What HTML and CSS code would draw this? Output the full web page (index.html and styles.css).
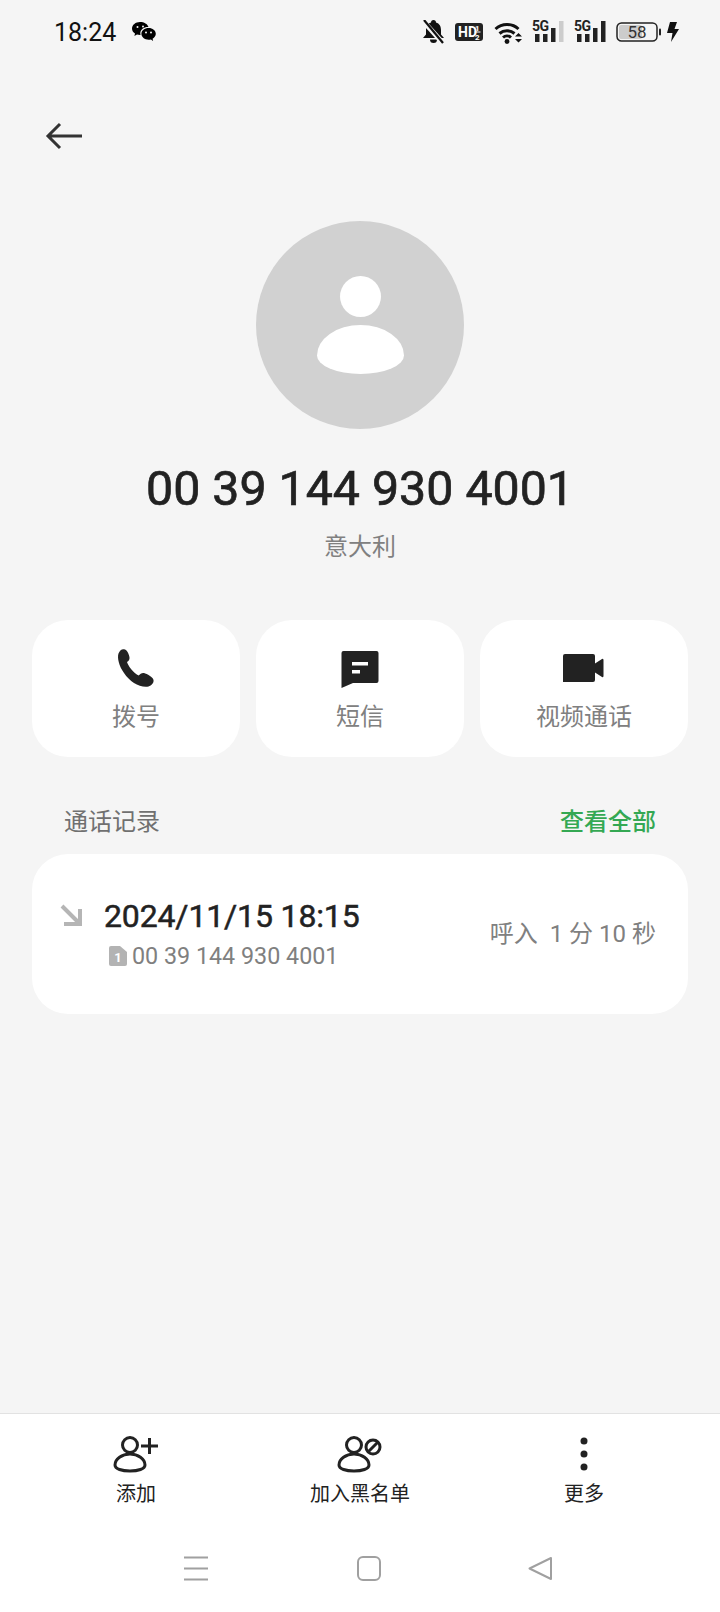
FILE: index.html
```html
<!DOCTYPE html>
<html lang="zh-CN">
<head>
    <meta charset="UTF-8">
    <meta name="viewport" content="width=device-width, initial-scale=1.0">
    <title>通话详情</title>
    <link rel="stylesheet" href="styles.css">
</head>
<body>

<div class="page">
    <!-- 状态栏 -->
    <div class="status-bar">
        <div class="status-left">
            <span class="time">18:24</span>
            <svg class="wechat" width="24" height="20" viewBox="0 0 24 20">
                <path d="M8 0C3.600 0 0 2.900 0 6.500c0 2.100 1.200 3.900 3 5.100L2.400 14l2.600-1.400c.9.300 1.900.4 3 .4h.6a6 6 0 0 1-.3-1.800c0-3.600 3.500-6.300 7.700-6.300h.5C15.600 2.100 12.100 0 8 0z" fill="#000"/>
                <path d="M23.800 11.800c0-3.300-3.200-5.900-7.200-5.900s-7.200 2.600-7.200 5.900 3.200 5.900 7.200 5.900c.8 0 1.600-.1 2.300-.3l2.200 1.500-.5-2.200c1.900-1.100 3.200-2.900 3.200-4.900z" fill="#000"/>
                <circle cx="5.500" cy="5" r="1" fill="#f5f5f5"/>
                <circle cx="11" cy="4.500" r="1" fill="#f5f5f5"/>
                <circle cx="14" cy="10.500" r="1" fill="#f5f5f5"/>
                <circle cx="19" cy="10.500" r="1" fill="#f5f5f5"/>
            </svg>
        </div>
        <div class="status-right">
            <svg width="21" height="24" viewBox="0 0 21 24">
                <path d="M10.500 0a2.500 2.500 0 0 1 2.500 2.500c3.500 1 5 4 5 7.500v4.500l3 3.500H0l3-3.500V10c0-3.500 1.500-6.500 5-7.500A2.500 2.500 0 0 1 10.500 0z" fill="#111"/>
                <path d="M7 19.500h7a3.500 3.500 0 0 1-7 0z" fill="#111"/>
                <path d="M0 1l20 22" stroke="#f5f5f5" stroke-width="5"/>
                <path d="M1 0l19 23" stroke="#111" stroke-width="2.200"/>
            </svg>
            <svg class="ml-11" width="28" height="18" viewBox="0 0 28 18">
                <rect width="28" height="18" rx="3" fill="#222"/>
                <text x="3" y="14" class="hd-text">HD</text>
                <text x="20" y="8" class="hd-sim">1</text>
                <text x="20" y="16.500" class="hd-sim">2</text>
                <path d="M19.500 9h6" stroke="#fff" stroke-width="1"/>
            </svg>
            <svg class="ml-11" width="29" height="23" viewBox="0 0 29 23">
                <path d="M1.500 8a17 17 0 0 1 23 0M5.500 12.500a11.500 11.500 0 0 1 15 0M9 16.500a6 6 0 0 1 8 0" fill="none" stroke="#111" stroke-width="3"/>
                <circle cx="13" cy="20.500" r="2.400" fill="#111"/>
                <path d="M21 15.500l3.500-3.500 3.500 3.500zM21 18l3.500 3.500 3.500-3.500z" fill="#111"/>
            </svg>
            <svg class="ml-9" width="32" height="28" viewBox="0 0 32 28">
                <text x="0" y="13" class="net-text">5G</text>
                <rect x="3" y="16" width="4.500" height="8" fill="#222"/>
                <rect x="11" y="16" width="4.500" height="8" fill="#222"/>
                <rect x="19" y="10" width="4.500" height="14" fill="#222"/>
                <rect x="27" y="3" width="4.500" height="21" fill="#ccc"/>
            </svg>
            <svg class="ml-10" width="32" height="28" viewBox="0 0 32 28">
                <text x="0" y="13" class="net-text">5G</text>
                <rect x="3" y="16" width="4.500" height="8" fill="#222"/>
                <rect x="11" y="16" width="4.500" height="8" fill="#222"/>
                <rect x="19" y="10" width="4.500" height="14" fill="#222"/>
                <rect x="27" y="3" width="4.500" height="21" fill="#222"/>
            </svg>
            <svg class="ml-10" width="46" height="20" viewBox="0 0 46 20">
                <rect x="3" y="3" width="23" height="14" rx="2" fill="#ccc"/>
                <rect x="1" y="1" width="40" height="18" rx="4.500" fill="none" stroke="#222" stroke-width="1.500"/>
                <rect x="43" y="6.500" width="2" height="7" rx="1" fill="#222"/>
                <text x="21" y="15.500" class="battery-text">58</text>
            </svg>
            <svg class="ml-4" width="13" height="20" viewBox="0 0 13 20">
                <path d="M4 0h7L8.500 7H13L5 20l1.500-9H1z" fill="#111"/>
            </svg>
        </div>
    </div>

    <div class="top-nav">
        <svg width="38" height="28" viewBox="0 0 38 28">
            <path d="M37 14H3M15 2L3 14l12 12" fill="none" stroke="#333" stroke-width="3"/>
        </svg>
    </div>

    <!-- 联系人 -->
    <div class="contact">
        <div class="avatar">
            <span class="avatar-head"></span>
            <span class="avatar-body"></span>
        </div>
        <h1 class="contact-number">00 39 144 930 4001</h1>
        <div class="contact-place">意大利</div>
    </div>

    <div class="actions">
        <div class="action-card">
            <svg width="40" height="40" viewBox="0 0 40 40">
                <path d="M2.500 5.500C4 1.500 6.500.500 9 1.500c2.500 1 4 5 4.500 8 .3 2-1 3.500-2.500 4.500 1.500 4.500 6 10.500 11.500 13.500 1.500-1.500 3.500-3 5.500-2.500 3 .8 9 4 9.500 7 .5 3-2 5.500-5 6.500C24 40 14 34 8 25 3 18 1 10 2.500 5.500z" fill="#222"/>
            </svg>
            <span class="action-label">拨号</span>
        </div>
        <div class="action-card">
            <svg width="40" height="40" viewBox="0 0 40 40">
                <path d="M3.500 3h33a2 2 0 0 1 2 2v28a2 2 0 0 1-2 2H13L1.500 40V5a2 2 0 0 1 2-2z" fill="#222"/>
                <rect x="12" y="14" width="16" height="3.500" fill="#fff"/>
                <rect x="12" y="22" width="8" height="3.500" fill="#fff"/>
            </svg>
            <span class="action-label">短信</span>
        </div>
        <div class="action-card">
            <svg width="42" height="40" viewBox="0 0 42 40">
                <path d="M2 6h28a2 2 0 0 1 2 2v24a2 2 0 0 1-2 2H0V8a2 2 0 0 1 2-2z" fill="#222"/>
                <path d="M32 15.500l7-4.500a1 1 0 0 1 1.500 1v16a1 1 0 0 1-1.500 1l-7-4.500z" fill="#222"/>
            </svg>
            <span class="action-label">视频通话</span>
        </div>
    </div>

    <div class="record-head">
        <span class="record-title">通话记录</span>
        <span class="record-all">查看全部</span>
    </div>

    <div class="record-card">
        <svg class="record-arrow" width="22" height="22" viewBox="0 0 22 22">
            <path d="M2 2l17 17M20 5v15H4" fill="none" stroke="#b5b5b5" stroke-width="4"/>
        </svg>
        <div class="record-info">
            <div class="record-date">2024/11/15 18:15</div>
            <div class="record-sub">
                <svg width="18" height="20" viewBox="0 0 18 20">
                    <path d="M2 0h9l7 6v12a2 2 0 0 1-2 2H2a2 2 0 0 1-2-2V2a2 2 0 0 1 2-2z" fill="#b3b3b3"/>
                    <text x="9" y="15.500" class="sim-text">1</text>
                </svg>
                <span>00 39 144 930 4001</span>
            </div>
        </div>
        <div class="record-duration">呼入&nbsp; 1 分 10 秒</div>
    </div>

    <!-- 底部操作 -->
    <div class="bottom-bar">
        <div class="bottom-item">
            <svg width="46" height="38" viewBox="0 0 46 38">
                <circle cx="17" cy="10" r="7.500" fill="none" stroke="#222" stroke-width="3"/>
                <path d="M2 30c0-6 7-11 15-11s15 5 15 11c0 4-7 6-15 6s-15-2-15-6z" fill="none" stroke="#222" stroke-width="3"/>
                <path d="M28 11h17M36.500 3v16" fill="none" stroke="#222" stroke-width="3"/>
            </svg>
            <span class="bottom-label">添加</span>
        </div>
        <div class="bottom-item">
            <svg width="46" height="38" viewBox="0 0 46 38">
                <circle cx="17" cy="10" r="7.500" fill="none" stroke="#222" stroke-width="3"/>
                <path d="M2 30c0-6 7-11 15-11s15 5 15 11c0 4-7 6-15 6s-15-2-15-6z" fill="none" stroke="#222" stroke-width="3"/>
                <circle cx="36" cy="12" r="7" fill="none" stroke="#222" stroke-width="3"/>
                <path d="M31 17l10-10" stroke="#222" stroke-width="3"/>
            </svg>
            <span class="bottom-label">加入黑名单</span>
        </div>
        <div class="bottom-item">
            <svg width="46" height="38" viewBox="0 0 46 38">
                <circle cx="23" cy="6" r="3.500" fill="#222"/>
                <circle cx="23" cy="19" r="3.500" fill="#222"/>
                <circle cx="23" cy="32" r="3.500" fill="#222"/>
            </svg>
            <span class="bottom-label">更多</span>
        </div>
    </div>

    <!-- 导航条 -->
    <div class="nav-bar">
        <svg width="26" height="25" viewBox="0 0 26 25">
            <path d="M1 1.500h24M1 12.500h24M1 23.500h24" stroke="#a0a0a0" stroke-width="2"/>
        </svg>
        <svg width="24" height="25" viewBox="0 0 24 25">
            <rect x="1" y="1" width="22" height="23" rx="5" fill="none" stroke="#a0a0a0" stroke-width="2"/>
        </svg>
        <svg width="24" height="25" viewBox="0 0 24 25">
            <path d="M23 2v21L1.500 12.500z" fill="none" stroke="#a0a0a0" stroke-width="2" stroke-linejoin="round"/>
        </svg>
    </div>
</div>

</body>
</html>
```

FILE: styles.css
```css
* {
    box-sizing: border-box;
}

body {
    margin: 0;
    padding: 0;
    background-color: #f5f5f5;
    font-family: Roboto, "Noto Sans CJK SC", sans-serif;
}

.page {
    width: 720px;
    height: 1612px;
    display: flex;
    flex-direction: column;
}

svg {
    display: block;
    flex-shrink: 0;
}

.status-bar {
    height: 64px;
    padding: 0 41px 0 54px;
    display: flex;
    align-items: center;
    justify-content: space-between;
}

.status-left,
.status-right {
    display: flex;
    align-items: center;
}

.time {
    font-size: 25px;
    color: #111;
}

.wechat {
    margin-left: 16px;
}

.ml-4 { margin-left: 4px; }
.ml-9 { margin-left: 9px; }
.ml-10 { margin-left: 10px; }
.ml-11 { margin-left: 11px; }

.hd-text {
    font-size: 14px;
    font-weight: 700;
    fill: #fff;
}

.hd-sim {
    font-size: 8px;
    font-weight: 700;
    fill: #fff;
}

.net-text {
    font-size: 14px;
    font-weight: 700;
    letter-spacing: -0.5px;
    fill: #222;
}

.battery-text {
    font-size: 17px;
    fill: #333;
    text-anchor: middle;
}

.top-nav {
    height: 28px;
    margin-top: 58px;
    padding-left: 45px;
}

.contact {
    margin-top: 71px;
    display: flex;
    flex-direction: column;
    align-items: center;
}

.avatar {
    width: 208px;
    height: 208px;
    padding-top: 55px;
    border-radius: 50%;
    background-color: #d1d1d1;
    display: flex;
    flex-direction: column;
    align-items: center;
}

.avatar-head {
    width: 41px;
    height: 41px;
    border-radius: 50%;
    background-color: #fff;
}

.avatar-body {
    width: 87px;
    height: 49px;
    margin-top: 8px;
    border-radius: 50% 50% 50% 50% / 62% 62% 38% 38%;
    background-color: #fff;
}

.contact-number {
    margin: 29px 0 0;
    font-size: 48.3px;
    line-height: 62px;
    font-weight: 400;
    -webkit-text-stroke: 0.7px #222;
    color: #222;
}

.contact-place {
    margin-top: 9px;
    font-size: 24px;
    line-height: 36px;
    color: #808080;
}

.actions {
    margin-top: 55px;
    padding: 0 32px;
    display: grid;
    grid-template-columns: repeat(3, 208px);
    gap: 16px;
}

.action-card {
    height: 137px;
    padding-top: 28px;
    background-color: #fff;
    border-radius: 36px;
    display: flex;
    flex-direction: column;
    align-items: center;
}

.action-label {
    margin-top: 11px;
    font-size: 24px;
    line-height: 36px;
    color: #808080;
}

.record-head {
    margin-top: 47px;
    padding: 0 64px;
    display: flex;
    justify-content: space-between;
    font-size: 24px;
    line-height: 36px;
}

.record-title {
    color: #707070;
}

.record-all {
    color: #34a853;
    font-weight: 500;
}

.record-card {
    height: 160px;
    margin: 14px 32px 0;
    padding: 0 32px 0 28px;
    background-color: #fff;
    border-radius: 36px;
    display: flex;
    align-items: center;
}

.record-arrow {
    align-self: flex-start;
    margin-top: 50px;
}

.record-info {
    margin-left: 22px;
    flex: 1;
}

.record-date {
    font-size: 32px;
    line-height: 42px;
    font-weight: 400;
    letter-spacing: -0.15px;
    -webkit-text-stroke: 0.5px #222;
    color: #222;
}

.record-sub {
    margin-top: 2px;
    padding-left: 5px;
    display: flex;
    align-items: center;
    gap: 5px;
    font-size: 23.3px;
    line-height: 34px;
    color: #808080;
}

.sim-text {
    font-size: 13px;
    font-weight: 700;
    fill: #fff;
    text-anchor: middle;
}

.record-duration {
    font-size: 24px;
    line-height: 36px;
    color: #808080;
}

.bottom-bar {
    margin-top: auto;
    height: 118px;
    padding: 21px 32px 0;
    background-color: #fff;
    border-top: 1px solid #e2e2e2;
    display: grid;
    grid-template-columns: repeat(3, 208px);
    gap: 16px;
}

.bottom-item {
    display: flex;
    flex-direction: column;
    align-items: center;
}

.bottom-label {
    margin-top: 6px;
    font-size: 20px;
    line-height: 30px;
    color: #222;
}

.nav-bar {
    height: 81px;
    padding: 25px 168px 0 183px;
    background-color: #fff;
    display: flex;
    justify-content: space-between;
    align-items: flex-start;
}
```
